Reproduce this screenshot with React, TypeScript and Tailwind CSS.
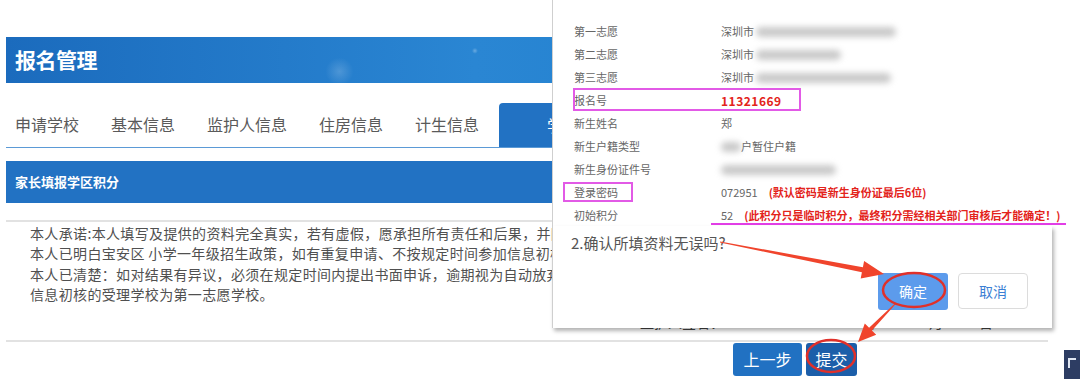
import React from 'react';

// rows of the pasted info panel
interface InfoRow {
    label: string;
    value?: React.ReactNode;
}

const Blur = ({ w, ml = 0 }: { w: number; ml?: number }) => (
    <span
        className="inline-block h-[10px] rounded-full bg-[#c9c9c9] blur-[3px] align-middle"
        style={{ width: w, marginLeft: ml }}
    />
);

export default function App() {
    const tabs = ['申请学校', '基本信息', '监护人信息', '住房信息', '计生信息'];

    const rows: InfoRow[] = [
        { label: '第一志愿', value: <><span>深圳市</span><Blur w={140} ml={2} /></> },
        { label: '第二志愿', value: <><span>深圳市</span><Blur w={85} ml={2} /></> },
        { label: '第三志愿', value: <><span>深圳市</span><Blur w={135} ml={2} /></> },
        { label: '报名号', value: <span className="text-[12px] font-bold tracking-[0.5px] text-[#e3231b]">11321669</span> },
        { label: '新生姓名', value: <span>郑</span> },
        { label: '新生户籍类型', value: <><Blur w={20} /><span>户暂住户籍</span></> },
        { label: '新生身份证件号', value: <Blur w={115} /> },
        {
            label: '登录密码',
            value: (
                <>
                    <span>072951</span>
                    <span className="ml-[11px] font-bold text-[#e3231b]">(默认密码是新生身份证最后6位)</span>
                </>
            ),
        },
        {
            label: '初始积分',
            value: (
                <>
                    <span>52</span>
                    <span className="ml-[11px] font-bold text-[#e3231b]">(此积分只是临时积分，最终积分需经相关部门审核后才能确定！)</span>
                </>
            ),
        },
    ];

    return (
        <div
            className="relative h-[379px] w-[1080px] overflow-hidden bg-white"
            style={{ fontFamily: '"Noto Sans CJK SC", "Noto Sans", sans-serif' }}
        >
            {/* background page */}
            <div className="ml-[6px] w-[1042px] pt-[37px]">
                <div className="relative flex h-[46px] items-center overflow-hidden bg-[radial-gradient(circle_at_32%_75%,rgba(255,255,255,0.18)_0,transparent_14px),radial-gradient(circle_at_60%_55%,rgba(255,255,255,0.14)_0,transparent_12px),radial-gradient(circle_at_45%_30%,rgba(255,255,255,0.3)_0,transparent_3px),linear-gradient(90deg,#1b6bbd,#2a86d3_45%,#2080cf_75%,#1a73c6)] pl-[9px]">
                    <span className="text-[21px] font-bold tracking-[-0.5px] text-white">报名管理</span>
                </div>

                {/* tabs */}
                <div className="flex h-[65px] items-end border-b border-[#5b9ad6] pl-[9px]">
                    <div className="flex items-center gap-[32px] pb-[11px]">
                        {tabs.map((t) => (
                            <span key={t} className="text-[16px] text-[#5a5a5a]">
                                {t}
                            </span>
                        ))}
                    </div>
                    <div className="ml-[20px] flex h-[44px] items-center rounded-t-[4px] bg-[#2272c3] pl-[48px] pr-[16px] text-[16px] text-white">
                        学区积分
                    </div>
                </div>

                <div className="mt-[13px] flex h-[42px] items-center bg-[#2272c3] pl-[9px]">
                    <span className="text-[13px] font-bold text-white">家长填报学区积分</span>
                </div>

                <div className="mt-[17px] border-t-2 border-[#e2e2e2] pl-[24px] pt-[1px] text-[14px] leading-[20.4px] tracking-[0.35px] text-[#505050]">
                    <p className="whitespace-nowrap">本人承诺:本人填写及提供的资料完全真实，若有虚假，愿承担所有责任和后果，并同意取消申请资格。</p>
                    <p className="whitespace-nowrap">本人已明白宝安区 小学一年级招生政策，如有重复申请、不按规定时间参加信息初核的，视为放弃申请。</p>
                    <p className="whitespace-nowrap">本人已清楚：如对结果有异议，必须在规定时间内提出书面申诉，逾期视为自动放弃。</p>
                    <p className="whitespace-nowrap">信息初核的受理学校为第一志愿学校。</p>
                </div>

                <div className="mt-[6px] flex h-[23px] items-center text-[14px] text-[#444]">
                    <span className="ml-[634px]">监护人签名：</span>
                    <span className="ml-[100px]">2020</span>
                    <span className="ml-[10px]">年</span>
                    <span className="ml-[50px]">月</span>
                    <span className="ml-[36px]">日</span>
                </div>

                <div className="mt-[6px] flex gap-[4px] border-t-2 border-[#e2e2e2] pt-[1px] pl-[727px]">
                    <button className="h-[33px] w-[69px] rounded-[3px] bg-[#2171c2] text-[16px] text-white">上一步</button>
                    <button className="h-[33px] w-[51px] rounded-[3px] bg-[#1c5ea9] text-[16px] text-white">提交</button>
                </div>
            </div>

            {/* pasted info panel */}
            <div className="absolute left-[552px] top-0 h-[226px] w-[528px] border-l border-[#cfcfcf] bg-white pt-[20px] text-[11px] text-[#666]">
                {rows.map((r) => (
                    <div key={r.label} className="relative flex h-[23px] items-center">
                        <span className="w-[168px] pl-[21px]">{r.label}</span>
                        <div className="flex items-center whitespace-nowrap">{r.value}</div>
                        {r.label === '报名号' && (
                            <div className="absolute left-[20px] top-[-1px] h-[23px] w-[228px] border-2 border-[#e25ae6]" />
                        )}
                        {r.label === '登录密码' && (
                            <div className="absolute left-[10px] top-[1px] h-[20px] w-[70px] border-2 border-[#e25ae6]" />
                        )}
                        {r.label === '初始积分' && (
                            <div className="absolute left-[158px] top-[19px] h-[2px] w-[355px] bg-[#e23ee6]" />
                        )}
                    </div>
                ))}
            </div>

            {/* confirm dialog */}
            <div className="absolute left-[552px] top-[226px] flex h-[102px] w-[500px] flex-col border-l border-[#cfcfcf] bg-white shadow-[2px_3px_4px_rgba(0,0,0,0.3)]">
                <div className="pl-[18px] pt-[6px] text-[15px] text-[#555]">2.确认所填资料无误吗?</div>
                <div className="mt-auto mb-[18px] flex justify-end gap-[10px] pr-[24px]">
                    <button className="h-[37px] w-[70px] rounded-[3px] bg-[#5c9bec] text-[14px] text-white">确定</button>
                    <button className="h-[36px] w-[70px] rounded-[4px] border border-[#dcdcdc] bg-white text-[14px] text-[#3b7fd4]">取消</button>
                </div>
            </div>

            {/* annotation arrows and circles */}
            <svg className="pointer-events-none absolute inset-0" width="1080" height="379" viewBox="0 0 1080 379">
                <polygon
                    points="720.1,241.5 862.9,267.3 864.1,261 884,274 860.7,278.6 861.9,272.3 719.9,242.5"
                    fill="#f0442c"
                />
                <polygon
                    points="895.6,302.7 869.1,327.7 864.8,323.5 858,342 876.2,334.7 871.9,330.5 896.4,303.3"
                    fill="#f0442c"
                />
                <ellipse cx="914" cy="290" rx="31" ry="17" fill="none" stroke="#e0302a" strokeWidth="2.5" />
                <ellipse cx="831" cy="356" rx="24" ry="16" fill="none" stroke="#e0302a" strokeWidth="2.5" />
            </svg>

            {/* floating widget bottom right */}
            <div className="absolute left-[1064px] top-[350px] flex h-[29px] w-[16px] items-start bg-[#2d3d63] pl-[4px] pt-[8px]">
                <div className="h-[10px] w-[8px] border-l-2 border-t-2 border-[#dfe6f2]" />
            </div>
        </div>
    );
}
